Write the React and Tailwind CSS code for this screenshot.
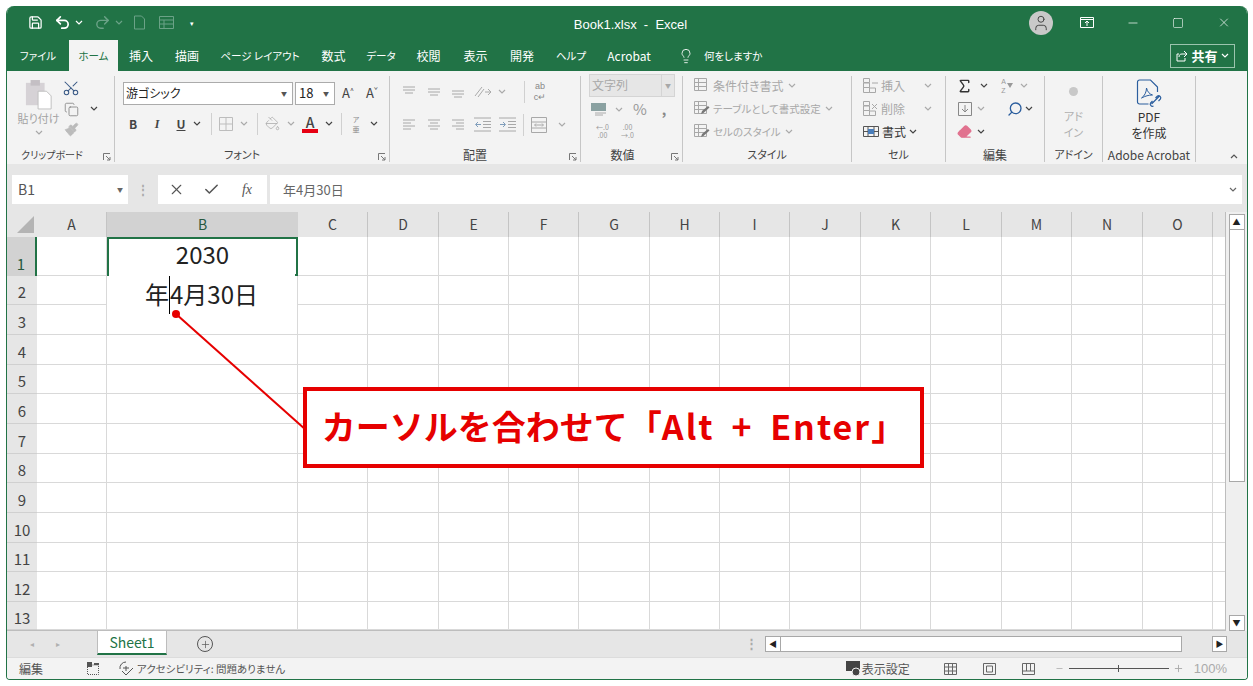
import React from "react";
import {
    Check,
    Copy,
    Eraser,
    Lightbulb,
    Minus,
    Paintbrush,
    PaintBucket,
    Plus,
    Redo2,
    Save,
    Scissors,
    Search,
    Sigma,
    Square,
    Undo2,
    User,
    X,
} from "lucide-react";

const cols = ["A", "B", "C", "D", "E", "F", "G", "H", "I", "J", "K", "L", "M", "N", "O", ""];
const rows = [1, 2, 3, 4, 5, 6, 7, 8, 9, 10, 11, 12, 13];
const tabs = [
    ["ファイル", "w-[62px] text-[10.500px]"],
    ["ホーム", "w-[49px] text-[10.500px]"],
    ["挿入", "w-[46px]"],
    ["描画", "w-[46px]"],
    ["ページ レイアウト", "w-[100px] text-[10.500px]"],
    ["数式", "w-[47px]"],
    ["データ", "w-[48px] text-[10.500px]"],
    ["校閲", "w-[47px]"],
    ["表示", "w-[47px]"],
    ["開発", "w-[46px]"],
    ["ヘルプ", "w-[52px] text-[10.500px]"],
    ["Acrobat", "w-[64px]"],
];

const Chev = ({ className = "text-[#444]" }) => (
    <svg width="8" height="5" viewBox="0 0 8 5" className={className}>
        <path d="M1 1l3 3 3-3" fill="none" stroke="currentColor" strokeWidth="1.2" />
    </svg>
);

const Launcher = () => (
    <svg width="8" height="8" viewBox="0 0 8 8" className="text-[#777]">
        <path d="M.5 7V.5H7M3 3l4 4M4 7h3V4" fill="none" stroke="currentColor" />
    </svg>
);

const Slot = ({ w, children }) => (
    <div className={`flex shrink-0 items-center justify-center ${w}`}>{children}</div>
);

const Lines = ({ kind }) => {
    const paths = {
        top: "M1 2h12M1 5h12M3 8h8",
        mid: "M1 4h12M1 7h12M3 10h8",
        bot: "M1 6h12M1 9h12M3 12h8",
        left: "M1 2h12M1 5h8M1 8h12M1 11h8",
        center: "M1 2h12M3 5h8M1 8h12M3 11h8",
        right: "M1 2h12M5 5h8M1 8h12M5 11h8",
    };
    return (
        <svg width="14" height="14" viewBox="0 0 14 14" className="text-[#a8a8a8]">
            <path d={paths[kind]} fill="none" stroke="currentColor" />
        </svg>
    );
};

const Indent = ({ flip }) => (
    <svg width="17" height="15" viewBox="0 0 17 15" className="text-[#a8a8a8]">
        <path d="M0 1h17M0 14h17M9 4.500h8M9 7.500h8M9 10.500h8" fill="none" stroke="currentColor" />
        <path d={flip ? "M1 7.500h5M4 5l2.500 2.500L4 10" : "M7 7.500H2M4 5L1.500 7.500 4 10"} fill="none" stroke="#7f9dbb" />
    </svg>
);

const CellIcon = ({ mark }) => (
    <svg width="15" height="15" viewBox="0 0 15 15" className="text-[#a8a8a8]">
        <path d="M.5.500h6v4h-6zM.5 5h6v4.500h-6zM.5 9.500h6v5h-6zM6.500 10h6v4.500h-6z" fill="none" stroke="currentColor" />
        {mark === "x" && <path d="M9 3l5 5M14 3l-5 5" stroke="currentColor" />}
        {mark === "plus" && <path d="M9 5h6" stroke="currentColor" />}
    </svg>
);

const StyleIcon = ({ pen }) => (
    <svg width="16" height="15" viewBox="0 0 16 15" className="text-[#a8a8a8]">
        <path d="M.5.500h12v12H.5zM.5 4.500h12M.5 8.500h12M4.500.500v12" fill="none" stroke="currentColor" />
        {pen && <path d="M7 13l1-3 6-5 1.500 1.500-6 5.500z" fill="#777" />}
    </svg>
);

const Group = ({ w, label, launcher, children }) => (
    <div className={`relative flex shrink-0 flex-col border-r border-[#c6c6c6] ${w}`}>
        <div className="h-[72px] shrink-0">{children}</div>
        <div className="flex h-[14px] items-center justify-center text-[11px] text-[#444]">{label}</div>
        {launcher && (
            <div className="absolute bottom-[1px] right-[3px]">
                <Launcher />
            </div>
        )}
    </div>
);

const Clipboard = () => (
    <Group w="w-[108px]" label={<span className="pr-[17px] text-[10px]">クリップボード</span>} launcher>
        <div className="flex pl-[9px] pt-[3px]">
            <div className="flex w-[45px] flex-col items-center">
                <svg width="28" height="31" viewBox="0 0 30 33">
                    <rect x="1" y="4" width="20" height="24" fill="#d6d2d6" />
                    <rect x="6" y="1" width="10" height="6" fill="#c4bfc4" />
                    <path d="M14 13h9l5 5v14H14z" fill="#fff" stroke="#bdbdbd" />
                </svg>
                <span className="mt-[1px] whitespace-nowrap text-[11px] leading-[14px] text-[#a3a3a3]">貼り付け</span>
                <Chev className="mt-[5px] text-[#a8a8a8]" />
            </div>
            <div className="-ml-[1px] flex w-[22px] flex-col items-center gap-[5px]">
                <Scissors size={18} strokeWidth={1.4} className="-rotate-90 text-[#3a5a86]" />
                <Copy size={15} strokeWidth={1.2} className="text-[#777]" />
                <Paintbrush size={15} strokeWidth={1.2} className="fill-[#bbb] text-[#bbb]" />
            </div>
            <div className="ml-[8px] pt-[27px]">
                <Chev />
            </div>
        </div>
    </Group>
);

const Font = () => (
    <Group w="w-[275px]" label={<span className="pr-[20px]">フォント</span>} launcher>
        <div className="flex items-center pl-[8px] pt-[6px]">
            <div className="flex h-[23px] w-[170px] items-center justify-between border border-[#ababab] bg-white pl-[2px] pr-[5px] text-[12px] text-[#222]">
                游ゴシック
                <span className="text-[6px] text-[#555]">▼</span>
            </div>
            <div className="ml-[2px] flex h-[23px] w-[40px] items-center justify-between border border-[#ababab] bg-white pl-[3px] pr-[5px] text-[13px] text-[#222]">
                18
                <span className="text-[6px] text-[#555]">▼</span>
            </div>
            <Slot w="ml-[1px] w-[24px] text-[13px] text-[#444]">
                A<sup className="text-[7px]">^</sup>
            </Slot>
            <Slot w="w-[24px] text-[13px] text-[#444]">
                A<sup className="text-[7px]">ˇ</sup>
            </Slot>
        </div>
        <div className="mt-[8px] flex h-[22px] items-center pl-[7px] text-[#444]">
            <Slot w="w-[22px] text-[12px] font-bold">B</Slot>
            <Slot w="w-[26px] text-[12px] font-bold italic [font-family:'Liberation_Serif',serif]">I</Slot>
            <Slot w="w-[22px] text-[12px] font-bold underline">U</Slot>
            <Slot w="w-[10px]"><Chev /></Slot>
            <div className="ml-[9px] h-[22px] w-px bg-[#d0d0d0]" />
            <Slot w="w-[27px]">
                <svg width="14" height="14" viewBox="0 0 14 14">
                    <path d="M.5.500h13v13H.5zM7 .5v13M.5 7h13" fill="none" stroke="#bdbdbd" />
                </svg>
            </Slot>
            <Slot w="w-[9px]"><Chev className="text-[#aaa]" /></Slot>
            <div className="ml-[9px] h-[22px] w-px bg-[#d0d0d0]" />
            <Slot w="w-[29px]"><PaintBucket size={15} strokeWidth={1.2} className="text-[#a8a8a8]" /></Slot>
            <Slot w="w-[8px]"><Chev className="text-[#aaa]" /></Slot>
            <Slot w="ml-[1px] w-[28px]">
                <div className="flex flex-col items-center text-[14px] font-medium leading-[14px] text-[#444]">
                    A
                    <div className="h-[4px] w-[16px] bg-[#e60012]" />
                </div>
            </Slot>
            <Slot w="w-[10px]"><Chev /></Slot>
            <div className="ml-[7px] h-[22px] w-px bg-[#d0d0d0]" />
            <Slot w="w-[28px]">
                <span className="text-center text-[7px] leading-[10px] text-[#888]">
                    ア<br />亜
                </span>
            </Slot>
            <Slot w="w-[8px]"><Chev /></Slot>
        </div>
    </Group>
);

const Align = () => (
    <Group w="w-[191px]" label={<span className="pr-[20px] text-[12px]">配置</span>} launcher>
        <div className="flex items-center pl-[6px] pt-[5px]">
            <Slot w="w-[25px]"><Lines kind="top" /></Slot>
            <Slot w="w-[25px]"><Lines kind="mid" /></Slot>
            <Slot w="w-[24px]"><Lines kind="bot" /></Slot>
            <Slot w="w-[25px]">
                <svg width="18" height="16" viewBox="0 0 18 16">
                    <path d="M1 12L8 3M4 13l6-8M11 8h6M14 5l3 3-3 3" fill="none" stroke="#aaa" />
                </svg>
            </Slot>
            <Slot w="w-[14px]"><Chev className="text-[#aaa]" /></Slot>
            <div className="ml-[15px] h-[22px] w-px bg-[#d0d0d0]" />
            <Slot w="w-[30px]">
                <span className="text-center text-[9px] leading-[11px] text-[#888] [font-family:'Liberation_Sans',sans-serif]">
                    ab<br />c↵
                </span>
            </Slot>
        </div>
        <div className="mt-[11px] flex items-center pl-[6px]">
            <Slot w="w-[25px]"><Lines kind="left" /></Slot>
            <Slot w="w-[25px]"><Lines kind="center" /></Slot>
            <Slot w="w-[24px]"><Lines kind="right" /></Slot>
            <Slot w="w-[25px]"><Indent /></Slot>
            <Slot w="w-[25px]"><Indent flip /></Slot>
            <div className="ml-[3px] h-[22px] w-px bg-[#d0d0d0]" />
            <Slot w="w-[30px]">
                <svg width="16" height="16" viewBox="0 0 16 16">
                    <path d="M.5.500h15v15H.5zM.5 5h15M.5 11h15M4 8h8M5 6.500L3.500 8 5 9.500M11 6.500L12.500 8 11 9.500" fill="none" stroke="#a8a8a8" />
                </svg>
            </Slot>
            <Slot w="w-[16px]"><Chev className="text-[#aaa]" /></Slot>
        </div>
    </Group>
);

const NumberGroup = () => (
    <Group w="w-[102px]" label={<span className="pr-[18px] text-[12px]">数値</span>} launcher>
        <div className="-mt-[2px] pl-[8px]">
            <div className="flex h-[23px] w-[86px] items-center border border-[#d4d4d4] bg-[#e6e6e6] pl-[2px] text-[12px] text-[#a8a8a8]">
                <span className="grow">文字列</span>
                <span className="flex h-full w-[13px] items-center justify-center border-l border-[#d4d4d4] text-[6px]">▼</span>
            </div>
            <div className="mt-[3px] flex h-[20px] items-center">
                <Slot w="w-[19px]">
                    <svg width="16" height="15" viewBox="0 0 16 15">
                        <rect x="0" y="1" width="15" height="8" fill="#8aa1a1" />
                        <path d="M4 11h11M4 13h8" stroke="#aaa" />
                    </svg>
                </Slot>
                <Slot w="w-[21px]"><Chev className="text-[#aaa]" /></Slot>
                <Slot w="w-[22px] text-[15px] text-[#999]">%</Slot>
                <Slot w="w-[26px] text-[14px] font-bold text-[#888]">,</Slot>
            </div>
            <div className="mt-[3px] flex text-[7px] leading-[8px] text-[#999]">
                <Slot w="w-[27px]"><span className="text-center">←.0<br />.00</span></Slot>
                <Slot w="w-[23px]"><span className="text-center">.00<br />→.0</span></Slot>
            </div>
        </div>
    </Group>
);

const Styles = () => (
    <Group w="w-[169px]" label="スタイル">
        <div className="flex flex-col gap-[3px] pl-[11px] text-[12px] leading-[20px] text-[#a8a8a8]">
            <div className="flex items-center gap-[3px]"><StyleIcon />条件付き書式 <Chev className="ml-[1px] text-[#aaa]" /></div>
            <div className="flex items-center gap-[3px] text-[10.500px]"><StyleIcon pen />テーブルとして書式設定 <Chev className="ml-[1px] text-[#aaa]" /></div>
            <div className="flex items-center gap-[3px] text-[10.500px]"><StyleIcon pen />セルのスタイル <Chev className="ml-[1px] text-[#aaa]" /></div>
        </div>
    </Group>
);

const Cells = () => (
    <Group w="w-[94px]" label="セル">
        <div className="flex flex-col gap-[3px] pl-[11px] text-[12px] leading-[20px] text-[#a8a8a8]">
            <div className="flex items-center gap-[3px]"><CellIcon mark="plus" /><span className="w-[34px]">挿入</span><Chev className="ml-[6px] text-[#aaa]" /></div>
            <div className="flex items-center gap-[3px]"><CellIcon mark="x" /><span className="w-[34px]">削除</span><Chev className="ml-[6px] text-[#aaa]" /></div>
            <div className="flex items-center gap-[3px] text-[#333]">
                <svg width="16" height="15" viewBox="0 0 16 15">
                    <path d="M.5 2.500h15v10H.5zM.5 7.500h15M5 2.500v10M11 2.500v10" fill="none" stroke="#555" />
                    <rect x="5" y="5" width="6" height="5" fill="#4a7ebb" />
                </svg>
                書式 <Chev />
            </div>
        </div>
    </Group>
);

const Edit = () => (
    <Group w="w-[99px]" label={<span className="text-[12px]">編集</span>}>
        <div className="flex flex-col gap-[3px] pl-[10px]">
            <div className="flex h-[20px] items-center">
                <Slot w="w-[17px]"><Sigma size={18} strokeWidth={2} className="text-[#333]" /></Slot>
                <Slot w="w-[21px]"><Chev /></Slot>
                <Slot w="w-[26px] gap-[1px]">
                    <span className="text-[7px] leading-[9px] text-[#999] [font-family:'Liberation_Sans',sans-serif]">A<br />Z</span>
                    <svg width="6" height="5" viewBox="0 0 6 5"><path d="M0 0h6L3 5z" fill="#999" /></svg>
                </Slot>
                <Slot w="w-[8px]"><Chev className="text-[#aaa]" /></Slot>
            </div>
            <div className="flex h-[20px] items-center">
                <Slot w="w-[17px]">
                    <svg width="14" height="14" viewBox="0 0 14 14">
                        <path d="M.5.500h13v13H.5zM7 3v7M4 7l3 3 3-3" fill="none" stroke="#888" />
                    </svg>
                </Slot>
                <Slot w="w-[15px]"><Chev className="text-[#aaa]" /></Slot>
                <Slot w="ml-[17px] w-[19px]"><Search size={16} strokeWidth={2} className="-scale-x-100 text-[#2b5e9e]" /></Slot>
                <Slot w="w-[10px]"><Chev /></Slot>
            </div>
            <div className="flex h-[20px] items-center">
                <Slot w="w-[17px]"><Eraser size={15} className="fill-[#e1728f] text-[#e1728f]" /></Slot>
                <Slot w="w-[15px]"><Chev /></Slot>
            </div>
        </div>
    </Group>
);

const Addin = () => (
    <Group w="w-[58px]" label="アドイン">
        <div className="flex flex-col items-center pt-[11px] text-[11px] leading-[16px] text-[#b0b0b0]">
            <div className="mb-[12px] h-[9px] w-[9px] rounded-full bg-[#c8c8c8]" />
            <span>アド</span>
            <span>イン</span>
        </div>
    </Group>
);

const Acrobat = () => (
    <Group w="w-[93px]" label={<span className="whitespace-nowrap text-[12px]">Adobe Acrobat</span>}>
        <div className="flex flex-col items-center pt-[3px] text-[12px] leading-[16px] text-[#333]">
            <svg width="29" height="30" viewBox="0 0 26 30">
                <path d="M12 25H3a2 2 0 0 1-2-2V3a2 2 0 0 1 2-2h11l7 7v5" fill="none" stroke="#2b5e9e" strokeWidth="1.2" />
                <path d="M5 19c3-2 5-6 5-10 1 4 3 6 6 7-4 0-7 1-11 3z" fill="none" stroke="#2b5e9e" />
                <path d="M15 25l8-8m-6 10c-2 1-4-1-3-3l2-2m3-3l2-2c2-1 4 1 3 3l-2 2" fill="none" stroke="#2b5e9e" strokeWidth="1.2" />
            </svg>
            <span>PDF</span>
            <span>を作成</span>
        </div>
    </Group>
);

const Ribbon = () => (
    <div className="flex h-[93px] bg-[#f3f3f3] pb-[2px] pt-[5px]">
        <Clipboard />
        <Font />
        <Align />
        <NumberGroup />
        <Styles />
        <Cells />
        <Edit />
        <Addin />
        <Acrobat />
        <div className="flex grow items-end justify-end pb-[3px] pr-[9px]">
            <Chev className="rotate-180 text-[#555]" />
        </div>
    </div>
);

const TitleBar = () => (
    <div className="flex h-[34px] items-center bg-[#217346] text-white">
        <Slot w="ml-[19px] w-[18px]"><Save size={15} /></Slot>
        <Slot w="ml-[8px] w-[20px]"><Undo2 size={17} strokeWidth={2.4} /></Slot>
        <Slot w="ml-[1px] w-[12px]"><Chev className="text-white" /></Slot>
        <Slot w="ml-[7px] w-[20px]"><Redo2 size={17} strokeWidth={2} className="text-[#6ba287]" /></Slot>
        <Slot w="w-[14px]"><Chev className="text-[#6ba287]" /></Slot>
        <Slot w="ml-[6px] w-[14px]">
            <svg width="13" height="15" viewBox="0 0 13 15">
                <path d="M1.500 1h7l3 3v10h-10z" fill="none" stroke="#6ba287" />
            </svg>
        </Slot>
        <Slot w="ml-[12px] w-[16px]">
            <svg width="15" height="13" viewBox="0 0 15 13">
                <path d="M.5.500h14v12H.5zM.5 4h14M.5 8h14M5 4v8" fill="none" stroke="#6ba287" />
            </svg>
        </Slot>
        <Slot w="ml-[14px] w-[8px] text-[7px]">▾</Slot>
        <div className="grow pl-[36px] pt-[3px] text-center text-[13px] [font-family:'Liberation_Sans','Noto_Sans_CJK_JP',sans-serif]">
            Book1.xlsx&nbsp; -&nbsp; Excel
        </div>
        <div className="mr-[27px] flex h-[24px] w-[24px] items-center justify-center rounded-full bg-[#c9c9c9]">
            <User size={18} strokeWidth={1.3} className="text-[#444]" />
        </div>
        <Slot w="w-[14px]">
            <svg width="14" height="11" viewBox="0 0 14 11">
                <path d="M.5.500h13v10H.5zM.5 2.500h13M7 9V4M5 6l2-2 2 2" fill="none" stroke="#fff" />
            </svg>
        </Slot>
        <Slot w="ml-[32px] w-[14px]"><Minus size={14} strokeWidth={1.2} /></Slot>
        <Slot w="ml-[31px] w-[14px]"><Square size={12} strokeWidth={1.2} /></Slot>
        <Slot w="ml-[32px] mr-[16px] w-[14px]"><X size={15} strokeWidth={1.2} /></Slot>
    </div>
);

const TabBar = () => (
    <div className="flex h-[31px] items-stretch bg-[#217346] text-[12px] text-white">
        {tabs.map(([label, w]) =>
            label === "ホーム" ? (
                <div key={label} className={`flex items-center justify-center bg-[#f3f3f3] pt-[2px] text-[#217346] ${w}`}>
                    {label}
                </div>
            ) : (
                <div key={label} className={`flex items-center justify-center whitespace-nowrap pt-[2px] ${w}`}>
                    {label}
                </div>
            ),
        )}
        <div className="ml-[17px] flex items-center gap-[10px] pt-[2px] text-[10.500px]">
            <Lightbulb size={16} strokeWidth={1.3} />
            何をしますか
        </div>
        <div className="grow" />
        <div className="mb-[3px] mr-[12px] mt-[4px] flex w-[65px] items-center justify-center gap-[3px] border border-[#9cc4ae] text-[13px]">
            <svg width="12" height="12" viewBox="0 0 12 12">
                <path d="M8 1l3 3-3 3M11 4H6c-2 0-3 1-3 3M9 8v3H1V4h2" fill="none" stroke="#fff" />
            </svg>
            <span className="font-bold">共有</span>
            <Chev className="text-white" />
        </div>
    </div>
);

const FormulaBar = () => (
    <div className="flex h-[49px] items-center bg-[#e6e6e6] pl-[5px] pr-[5px] pt-[3px]">
        <div className="flex h-[29px] w-[116px] items-center justify-between bg-white pl-[6px] pr-[5px] text-[14px] text-[#555]">
            B1
            <span className="text-[6px] text-[#666]">▼</span>
        </div>
        <div className="flex w-[30px] justify-center text-[12px] font-bold text-[#aaa]">⋮</div>
        <div className="flex h-[29px] w-[109px] items-center bg-white text-[#555]">
            <Slot w="ml-[8px] w-[20px]"><X size={17} strokeWidth={1.6} /></Slot>
            <Slot w="ml-[15px] w-[20px]"><Check size={17} strokeWidth={2.2} /></Slot>
            <Slot w="ml-[16px] w-[20px] text-[14px] italic [font-family:'Liberation_Serif',serif]">
                fx
            </Slot>
        </div>
        <div className="ml-[3px] flex h-[29px] grow items-center justify-between bg-white pl-[13px] pr-[5px] text-[13px] text-[#666]">
            年4月30日
            <Chev className="text-[#666]" />
        </div>
    </div>
);

const cellClass = (r, c) => {
    if (r === 1 && c === "B") return "relative border-2 border-b-0 border-[#217346] bg-white";
    if (r === 2 && c === "B") return "relative border-r border-[#d9d9d9] bg-white";
    return "border-b border-r border-[#d9d9d9] bg-white";
};

const SheetGrid = () => (
    <div className="grid grow grid-cols-[30px_70px_191px_70px_71px_70px_70px_71px_70px_70px_71px_70px_71px_70px_71px_70px_13px] grid-rows-[25px_39px_29px_30px_30px_29px_30px_30px_29px_30px_30px_29px_30px_28px] overflow-hidden border-b border-r border-[#bdbdbd]">
        <div className="relative bg-[#e6e6e6]">
            <svg width="18" height="18" viewBox="0 0 18 18" className="absolute left-[10px] top-[4px]">
                <path d="M17 0v17H0z" fill="#b4b4b4" />
            </svg>
        </div>
        {cols.map((c, i) => (
            <div
                key={i}
                className={
                    c === "B"
                        ? "flex items-center justify-center bg-[#d2d2d2] text-[14px] text-[#27593e]"
                        : "flex items-center justify-center border-r border-[#c4c4c4] bg-[#e6e6e6] text-[14px] text-[#444]"
                }
            >
                {c}
            </div>
        ))}
        {rows.map((r) => (
            <React.Fragment key={r}>
                <div
                    className={
                        r === 1
                            ? "flex items-end justify-center border-r-2 border-[#217346] bg-[#d2d2d2] pb-[1px] text-[15px] leading-[22px] text-[#27593e]"
                            : "flex items-center justify-center border-b border-[#d0d0d0] bg-[#e6e6e6] pt-[4px] text-[15px] text-[#444]"
                    }
                >
                    {r}
                </div>
                {cols.map((c, i) => (
                    <div key={i} className={cellClass(r, c)}>
                        {r === 1 && c === "B" && (
                            <>
                                <div className="flex h-full items-center justify-center pb-[7px] text-[24px] text-[#222]">2030</div>
                                <div className="absolute -bottom-[1px] -right-[2px] h-[3px] w-[3px] bg-[#217346]" />
                            </>
                        )}
                        {r === 2 && c === "B" && (
                            <div className="flex h-full items-start justify-center pr-[1px] text-[24px] leading-[36px] text-[#222]">
                                <span>年</span>
                                <span className="h-[38px] border-l border-black" />
                                <span>4月30日</span>
                            </div>
                        )}
                    </div>
                ))}
            </React.Fragment>
        ))}
    </div>
);

const ScrollBtn = ({ children }) => (
    <div className="flex h-[16px] w-[16px] shrink-0 items-center justify-center border border-[#a8a8a8] bg-white text-[8px] leading-none text-[#222]">
        {children}
    </div>
);

const VScroll = () => (
    <div className="flex w-[21px] flex-col items-center bg-[#efefef] pt-[2px]">
        <ScrollBtn>▲</ScrollBtn>
        <div className="h-[252px] w-[16px] border border-t-0 border-[#a8a8a8] bg-white" />
        <div className="grow" />
        <ScrollBtn>▼</ScrollBtn>
    </div>
);

const SheetTabs = () => (
    <div className="flex h-[26px] items-start bg-[#e6e6e6] text-[#999]">
        <div className="flex w-[90px] items-center gap-[22px] pl-[23px] pt-[7px] text-[8px]">
            <span className="text-[#b0b0b0]">◂</span>
            <span className="text-[#b0b0b0]">▸</span>
        </div>
        <div className="flex h-[24px] w-[70px] items-center justify-center border-b-2 border-x border-x-[#bdbdbd] border-b-[#217346] bg-white text-[14px] text-[#217346]">
            Sheet1
        </div>
        <div className="ml-[30px] mt-[5px] flex h-[16px] w-[16px] items-center justify-center rounded-full border border-[#555] text-[#555]">
            <Plus size={11} strokeWidth={1.5} />
        </div>
        <div className="ml-[532px] mt-[4px] text-[13px] font-bold leading-[16px] text-[#aaa]">⋮</div>
        <div className="ml-[7px] mt-[5px] flex h-[16px] w-[462px] items-stretch">
            <div className="flex w-[16px] items-center justify-center border border-[#a8a8a8] bg-white text-[8px] text-[#222]">◀</div>
            <div className="w-[401px] border-y border-r border-[#a8a8a8] bg-white" />
            <div className="grow" />
            <div className="flex w-[15px] items-center justify-center border border-[#a8a8a8] bg-white text-[8px] text-[#222]">▶</div>
        </div>
    </div>
);

const StatusBar = () => (
    <div className="flex h-[22px] items-center border-t border-[#dcdcdc] bg-[#f3f3f3] text-[#555]">
        <span className="ml-[12px] w-[68px] text-[12px]">編集</span>
        <svg width="12" height="13" viewBox="0 0 12 13">
            <path d="M.5 3h11v9.500H.5z" fill="none" stroke="#555" strokeDasharray="1 1" />
            <rect x="0" y="0" width="5" height="5" fill="#555" />
            <rect x="7" y="1" width="5" height="2" fill="#555" />
        </svg>
        <svg width="17" height="15" viewBox="0 0 17 15" className="ml-[19px]">
            <path d="M8 1a6 6 0 0 0-6 7M8 5v5M5 7h6M4 10l4 4 7-7" fill="none" stroke="#555" />
        </svg>
        <span className="ml-[2px] w-[146px] whitespace-nowrap text-[10.500px]">アクセシビリティ: 問題ありません</span>
        <div className="grow" />
        <svg width="16" height="15" viewBox="0 0 16 15">
            <rect x="0" y="0" width="14" height="10" fill="#444" />
            <circle cx="10" cy="11" r="4" fill="#444" stroke="#f3f3f3" />
        </svg>
        <span className="mr-[34px] whitespace-nowrap text-[12px]">表示設定</span>
        <svg width="13" height="12" viewBox="0 0 13 12">
            <path d="M.5.500h12v11H.5zM4.500.5v11M8.500.5v11M.5 4h12M.5 8h12" fill="none" stroke="#666" />
        </svg>
        <svg width="13" height="12" viewBox="0 0 13 12" className="ml-[26px]">
            <path d="M.5.500h12v11H.5zM3.500 3h6v6h-6z" fill="none" stroke="#666" />
        </svg>
        <svg width="13" height="12" viewBox="0 0 13 12" className="ml-[26px]">
            <path d="M.5.500h12v11H.5zM.5 8h12M4.500.5V8M8.500.5V8" fill="none" stroke="#666" />
        </svg>
        <Minus size={9} className="ml-[20px] text-[#aaa]" />
        <div className="relative ml-[5px] h-px w-[100px] bg-[#555]">
            <div className="absolute left-[49px] top-[-3px] h-[7px] w-px bg-[#555]" />
        </div>
        <Plus size={11} className="ml-[4px] text-[#aaa]" />
        <span className="ml-[10px] mr-[20px] text-[13px] text-[#aaa] [font-family:'Liberation_Sans',sans-serif]">100%</span>
    </div>
);

const App = () => (
    <div className="h-[686px] w-[1253px] bg-white pl-[6px] pt-[6px] [font-family:'Noto_Sans_CJK_JP','Noto_Sans',sans-serif] [font-feature-settings:'palt']">
        <div className="relative flex h-[674px] w-[1242px] flex-col overflow-hidden rounded-b-[4px] rounded-t-[8px] border-x border-b border-[#217346]">
            <TitleBar />
            <TabBar />
            <Ribbon />
            <FormulaBar />
            <div className="flex h-[419px]">
                <SheetGrid />
                <VScroll />
            </div>
            <SheetTabs />
            <StatusBar />

            <svg width="140" height="125" viewBox="0 0 140 125" className="absolute left-[165px] top-[302px]">
                <circle cx="4" cy="6" r="4" fill="#e60000" />
                <path d="M4 6l130 116" stroke="#e60000" strokeWidth="2" />
            </svg>
            <div className="absolute left-[296px] top-[381px] flex h-[81px] w-[621px] items-center justify-center whitespace-nowrap border-[4px] border-[#e60000] bg-white pb-[4px] text-[34px] font-bold text-[#e60000] [font-feature-settings:normal]">
                カーソルを合わせて「<span className="tracking-[2px] [word-spacing:7px]">Alt + Enter</span>」
            </div>
        </div>
    </div>
);

export default App;
